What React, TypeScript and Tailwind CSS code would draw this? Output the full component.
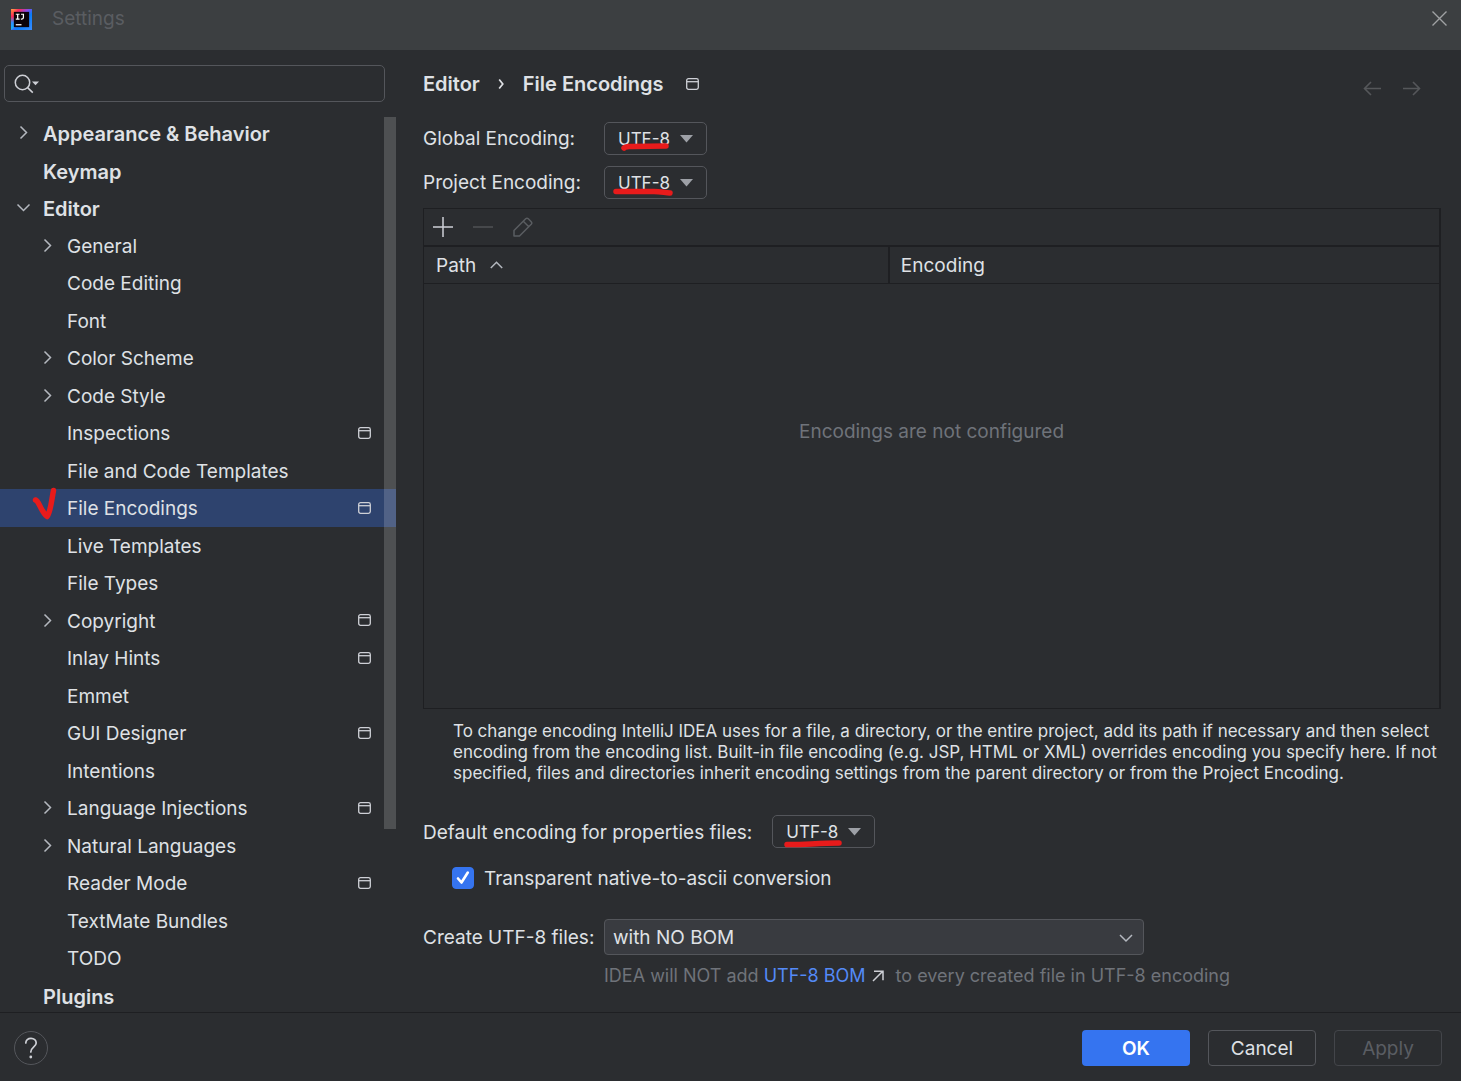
import { useState } from 'react';
import clsx from 'clsx';

type Item = { label: string; level: 0 | 1; arrow?: 'right' | 'down'; project?: boolean };

const TREE: Item[] = [
  { label: 'Appearance & Behavior', level: 0, arrow: 'right' },
  { label: 'Keymap', level: 0 },
  { label: 'Editor', level: 0, arrow: 'down' },
  { label: 'General', level: 1, arrow: 'right' },
  { label: 'Code Editing', level: 1 },
  { label: 'Font', level: 1 },
  { label: 'Color Scheme', level: 1, arrow: 'right' },
  { label: 'Code Style', level: 1, arrow: 'right' },
  { label: 'Inspections', level: 1, project: true },
  { label: 'File and Code Templates', level: 1 },
  { label: 'File Encodings', level: 1, project: true },
  { label: 'Live Templates', level: 1 },
  { label: 'File Types', level: 1 },
  { label: 'Copyright', level: 1, arrow: 'right', project: true },
  { label: 'Inlay Hints', level: 1, project: true },
  { label: 'Emmet', level: 1 },
  { label: 'GUI Designer', level: 1, project: true },
  { label: 'Intentions', level: 1 },
  { label: 'Language Injections', level: 1, arrow: 'right', project: true },
  { label: 'Natural Languages', level: 1, arrow: 'right' },
  { label: 'Reader Mode', level: 1, project: true },
  { label: 'TextMate Bundles', level: 1 },
  { label: 'TODO', level: 1 },
  { label: 'Plugins', level: 0 },
];

export default function App() {
  return (
    <div className="flex min-h-screen flex-col bg-[#2b2d30] font-['Inter',sans-serif] text-[19px] leading-6 text-[#dfe1e5]">
      <TitleBar />
      <div className="flex flex-1">
        <Sidebar />
        <EncodingsPage />
      </div>
      <Footer />
    </div>
  );
}

function TitleBar() {
  return (
    <header className="flex h-[50px] items-start justify-between bg-[#3c3f41] pt-[7px] pr-[13px] pl-[11px]">
      <div className="flex items-center gap-5">
        <IdeaLogo />
        <h1 className="text-[#5a5d61]">Settings</h1>
      </div>
      <button aria-label="Close" className="mt-[3px] text-[#a0a2a4]">
        <svg className="block" width="17" height="17" viewBox="0 0 17 17" fill="none" stroke="currentColor" strokeWidth="1.4">
          <path d="M1.5 1.5l14 14M15.5 1.5l-14 14" />
        </svg>
      </button>
    </header>
  );
}

function Sidebar() {
  const [selected, setSelected] = useState('File Encodings');

  return (
    <aside className="flex w-[397px] shrink-0 flex-col">
      <div className="relative mt-[15px] mr-3 ml-1 h-[37px]">
        <input
          aria-label="Search settings"
          className="h-full w-full rounded-[5px] border border-[#54565b] bg-transparent pl-10 outline-none"
        />
        <svg className="pointer-events-none absolute top-2 left-2.5" width="26" height="22" viewBox="0 0 26 22" fill="none">
          <circle cx="8.5" cy="9.5" r="7.2" stroke="#ced0d6" strokeWidth="1.5" />
          <path d="M13.6 14.6l5.2 5" stroke="#ced0d6" strokeWidth="1.5" />
          <path d="M18 8.5h7l-3.5 3.8z" fill="#ced0d6" />
        </svg>
      </div>
      <div className="relative mt-3 flex-1">
        {/* the last row runs a little under the footer */}
        <nav className="-mb-[3px] grid min-h-[900px] auto-rows-fr">
          {TREE.map((item) => (
            <TreeRow
              key={item.label}
              item={item}
              selected={item.label === selected}
              onSelect={() => setSelected(item.label)}
            />
          ))}
        </nav>
        <div className="pointer-events-none absolute top-[3px] right-px h-[712px] w-3 bg-white/17" />
      </div>
    </aside>
  );
}

function TreeRow({ item, selected, onSelect }: { item: Item; selected: boolean; onSelect: () => void }) {
  return (
    <button
      onClick={onSelect}
      aria-current={selected ? 'page' : undefined}
      className={clsx(
        'relative mr-px flex items-center pr-[25px] text-left',
        item.level === 0 ? 'pl-4 text-[20px] font-semibold' : 'pl-10',
        selected && 'bg-[#2e436e]',
      )}
    >
      <span className="flex w-[27px] shrink-0">
        {item.arrow && <Chevron down={item.arrow === 'down'} />}
      </span>
      <span className="flex-1 pt-[3px] whitespace-nowrap">{item.label}</span>
      {item.project && <ProjectIcon />}
      {selected && (
        <svg className="absolute -top-1 left-8" width="26" height="36" viewBox="0 0 26 36" fill="none">
          <path
            d="M3.500 15C7 16 9 26.500 15 31.500C18.500 28 19.500 15.500 21.500 5.500"
            stroke="#e81b1b"
            strokeWidth="5.500"
            strokeLinecap="round"
            strokeLinejoin="round"
          />
        </svg>
      )}
    </button>
  );
}

function EncodingsPage() {
  return (
    <main className="flex min-w-0 flex-1 flex-col pt-[22px] pr-5 pl-[26px]">
      <div className="flex items-center justify-between">
        <h2 className="flex items-center text-[20px] font-semibold">
          Editor
          <svg className="mx-[18px]" width="7" height="12" viewBox="0 0 7 12" fill="none" stroke="currentColor" strokeWidth="1.700">
            <path d="M1.200 1.500L4.800 6L1.200 10.500" />
          </svg>
          File Encodings
          <span className="ml-[22px]">
            <ProjectIcon />
          </span>
        </h2>
        <div className="mt-2 mr-5 flex gap-5 text-[#55575a]">
          <button aria-label="Back" disabled>
            <NavArrow />
          </button>
          <button aria-label="Forward" disabled className="rotate-180">
            <NavArrow />
          </button>
        </div>
      </div>

      <div className="mt-[26px] grid grid-cols-[181px_auto] items-center justify-start gap-y-[11px]">
        <label htmlFor="global">Global Encoding:</label>
        <EncodingSelect id="global" mark="M20 26C21.500 24 24 24.500 28 24.500L62 24" />
        <label htmlFor="project">Project Encoding:</label>
        <EncodingSelect id="project" mark="M12 25.500L50 25.500C56 25.500 60 26.500 66 27" />
      </div>

      <EncodingTable />

      <p className="mt-3 pl-[30px] text-[17px] leading-[21px]">
        To change encoding IntelliJ IDEA uses for a file, a directory, or the entire project, add its path if necessary
        and then select encoding from the encoding list. Built-in file encoding (e.g. JSP, HTML or XML) overrides
        encoding you specify here. If not specified, files and directories inherit encoding settings from the parent
        directory or from the Project Encoding.
      </p>

      <div className="mt-[31px] flex items-center gap-5">
        <label htmlFor="properties" className="pt-0.5">
          Default encoding for properties files:
        </label>
        <EncodingSelect id="properties" mark="M15 29.500C30 30 45 28 67 28" />
      </div>
      <label className="mt-[17px] ml-[29px] flex items-center gap-2.5">
        <span className="relative">
          <input type="checkbox" defaultChecked className="peer block size-[22px] appearance-none rounded-[4px] border border-[#6f737a] checked:border-[#3574f0] checked:bg-[#3574f0]" />
          <svg className="pointer-events-none absolute inset-0 hidden peer-checked:block" width="22" height="22" viewBox="0 0 22 22" fill="none">
            <path d="M6 11.500l3.500 4L15.800 5.500" stroke="#fff" strokeWidth="2.600" strokeLinecap="round" strokeLinejoin="round" />
          </svg>
        </span>
        <span className="pt-0.5">Transparent native-to-ascii conversion</span>
      </label>

      <div className="mt-7 mb-6 grid grid-cols-[181px_minmax(0,1fr)] items-center gap-y-[9px]">
        <label htmlFor="bom" className="pt-0.5">
          Create UTF-8 files:
        </label>
        <div className="relative w-[540px]">
          <select
            id="bom"
            className="block h-9 w-full appearance-none rounded-[4px] border border-[#54565b] bg-[#393b40] px-2 pt-0.5 outline-none"
          >
            <option>with NO BOM</option>
            <option>with BOM</option>
          </select>
          <svg className="pointer-events-none absolute top-[15px] right-[11px]" width="14" height="9" viewBox="0 0 14 9" fill="none" stroke="#b4b8bf" strokeWidth="1.500">
            <path d="M1 1l6 6 6-6" />
          </svg>
        </div>
        <p className="col-start-2 flex items-center text-[18px] whitespace-pre text-[#6f737a]">
          IDEA will NOT add{' '}
          <a href="#bom" className="flex items-center text-[#548af7]">
            UTF-8 BOM
            <svg className="mr-3 ml-1.5" width="12" height="12" viewBox="0 0 12 12" fill="none" stroke="#ced0d6" strokeWidth="1.500">
              <path d="M1 11L10.500 1.500M2 1.200h9v9" />
            </svg>
          </a>
          to every created file in UTF-8 encoding
        </p>
      </div>
    </main>
  );
}

function EncodingTable() {
  return (
    <section className="mt-[9px] flex flex-1 flex-col border border-r-2 border-[#1e1f22]">
      <div className="flex h-[38px] items-center border-b-2 border-[#1e1f22] pl-[9px]">
        <button aria-label="Add" className="text-[#ced0d6]">
          <svg className="block" width="20" height="20" viewBox="0 0 20 20" stroke="currentColor" strokeWidth="1.500">
            <path d="M10 0v20M0 10h20" />
          </svg>
        </button>
        <button aria-label="Remove" disabled className="ml-5 text-[#505254]">
          <svg className="block" width="20" height="20" viewBox="0 0 20 20" stroke="currentColor" strokeWidth="1.500">
            <path d="M0 10h20" />
          </svg>
        </button>
        <button aria-label="Edit" disabled className="ml-5 text-[#5a5d61]">
          <svg className="block" width="20" height="20" viewBox="0 0 20 20" fill="none" stroke="currentColor" strokeWidth="1.500" strokeLinejoin="round">
            <path d="M1 13.500L12.700 1.800Q14 .600 15.300 1.800L18.200 4.700Q19.400 6 18.200 7.300L6.500 19H1zM10.300 4.200l5.500 5.500" />
          </svg>
        </button>
      </div>
      <table className="w-full table-fixed text-left">
        <thead>
          <tr className="h-9 border-b border-[#1e1f22]">
            <th className="w-[45.8%] border-r-2 border-[#1e1f22] pt-[3px] pl-3 font-normal">
              <span className="flex items-center gap-3.5">
                Path
                <svg className="mb-[3px]" width="13" height="8" viewBox="0 0 13 8" fill="none" stroke="#b4b8bf" strokeWidth="1.500">
                  <path d="M.800 7l5.700-5.800L12.200 7" />
                </svg>
              </span>
            </th>
            <th className="pt-[3px] pl-[11px] font-normal">Encoding</th>
          </tr>
        </thead>
      </table>
      <p className="pt-[136px] text-center text-[#6f737a]">Encodings are not configured</p>
    </section>
  );
}

function EncodingSelect({ id, mark }: { id: string; mark: string }) {
  return (
    <div className="relative h-[33px] w-[103px]">
      <select
        id={id}
        className="h-full w-full appearance-none rounded-[5px] border border-[#54565b] bg-transparent pl-[13px] text-[17px] outline-none"
      >
        <option>UTF-8</option>
        <option>UTF-16</option>
      </select>
      <svg className="pointer-events-none absolute top-0 left-0" width="103" height="33" viewBox="0 0 103 33" fill="none">
        <path d="M76 13h13l-6.500 7.500z" fill="#9da0a6" />
        <path d={mark} stroke="#e81b1b" strokeWidth="5.500" strokeLinecap="round" />
      </svg>
    </div>
  );
}

function Footer() {
  return (
    <footer className="relative flex h-[69px] items-center gap-[18px] border-t border-[#1e1f22] bg-[#2b2d30] pt-0.5 pr-[19px] pl-3.5">
      <button aria-label="Help" className="mr-auto flex size-[34px] items-center justify-center rounded-full border border-[#54565b]">
        <svg width="14" height="22" viewBox="0 0 14 22" fill="none">
          <path d="M1.800 6C1.800 3 4 1.300 7 1.300S12.200 3.300 12.200 6C12.200 9.700 6.800 10.200 6.800 15" stroke="#ced0d6" strokeWidth="1.700" strokeLinecap="round" />
          <circle cx="6.800" cy="20" r="1.400" fill="#ced0d6" />
        </svg>
      </button>
      <button className="h-9 w-[108px] rounded-[4px] bg-[#3574f0] pt-0.5 font-semibold text-white">OK</button>
      <button className="h-9 w-[108px] rounded-[4px] border border-[#54565b] pt-0.5">Cancel</button>
      <button disabled className="h-9 w-[108px] rounded-[4px] border border-[#43454a] pt-0.5 text-[#5a5d63]">Apply</button>
    </footer>
  );
}

function Chevron({ down }: { down: boolean }) {
  return (
    <svg className={clsx('block', down && 'rotate-90')} width="15" height="15" viewBox="0 0 15 15" fill="none" stroke="#b4b8bf" strokeWidth="1.500">
      <path d="M4.500 1.500l6 6-6 6" />
    </svg>
  );
}

// marks settings that are stored per project
function ProjectIcon() {
  return (
    <svg className="block shrink-0" width="13" height="12" viewBox="0 0 13 12" fill="none" stroke="#ced0d6" strokeWidth="1.300">
      <rect x=".700" y=".700" width="11.600" height="10.600" rx="1.800" />
      <path d="M.700 3.700h11.600" />
    </svg>
  );
}

function NavArrow() {
  return (
    <svg className="block" width="19" height="15" viewBox="0 0 19 15" fill="none" stroke="currentColor" strokeWidth="1.600">
      <path d="M18 7.500H1.500M8 1L1.500 7.500L8 14" />
    </svg>
  );
}

function IdeaLogo() {
  return (
    <svg width="21" height="21" viewBox="0 0 22 22">
      <defs>
        <linearGradient id="idea" x1="0" y1="0" x2="1" y2="1">
          <stop offset="0" stopColor="#fdb44b" />
          <stop offset=".2" stopColor="#fe2857" />
          <stop offset=".42" stopColor="#8a4be8" />
          <stop offset=".6" stopColor="#087cfa" />
          <stop offset="1" stopColor="#3a8dff" />
        </linearGradient>
        <linearGradient id="idea-left" x1="0" y1="0" x2="0" y2="1">
          <stop offset="0" stopColor="#ff8a3c" />
          <stop offset=".35" stopColor="#fe2857" />
          <stop offset=".65" stopColor="#2f8fff" />
          <stop offset="1" stopColor="#12b5f5" />
        </linearGradient>
      </defs>
      <rect width="22" height="22" fill="url(#idea)" />
      <path d="M0 0l4 3v16l-4 3z" fill="url(#idea-left)" />
      <rect x="3" y="3" width="16" height="16" fill="#0b0208" />
      <path d="M5 5.500h4M7 5.500v5M5 10.500h4M10.500 5.500h2.500v3.500q0 1.500-1.500 1.500h-1.200" stroke="#fff" strokeWidth="1.300" fill="none" />
      <path d="M5 16.500h6" stroke="#fff" strokeWidth="1.300" />
    </svg>
  );
}
